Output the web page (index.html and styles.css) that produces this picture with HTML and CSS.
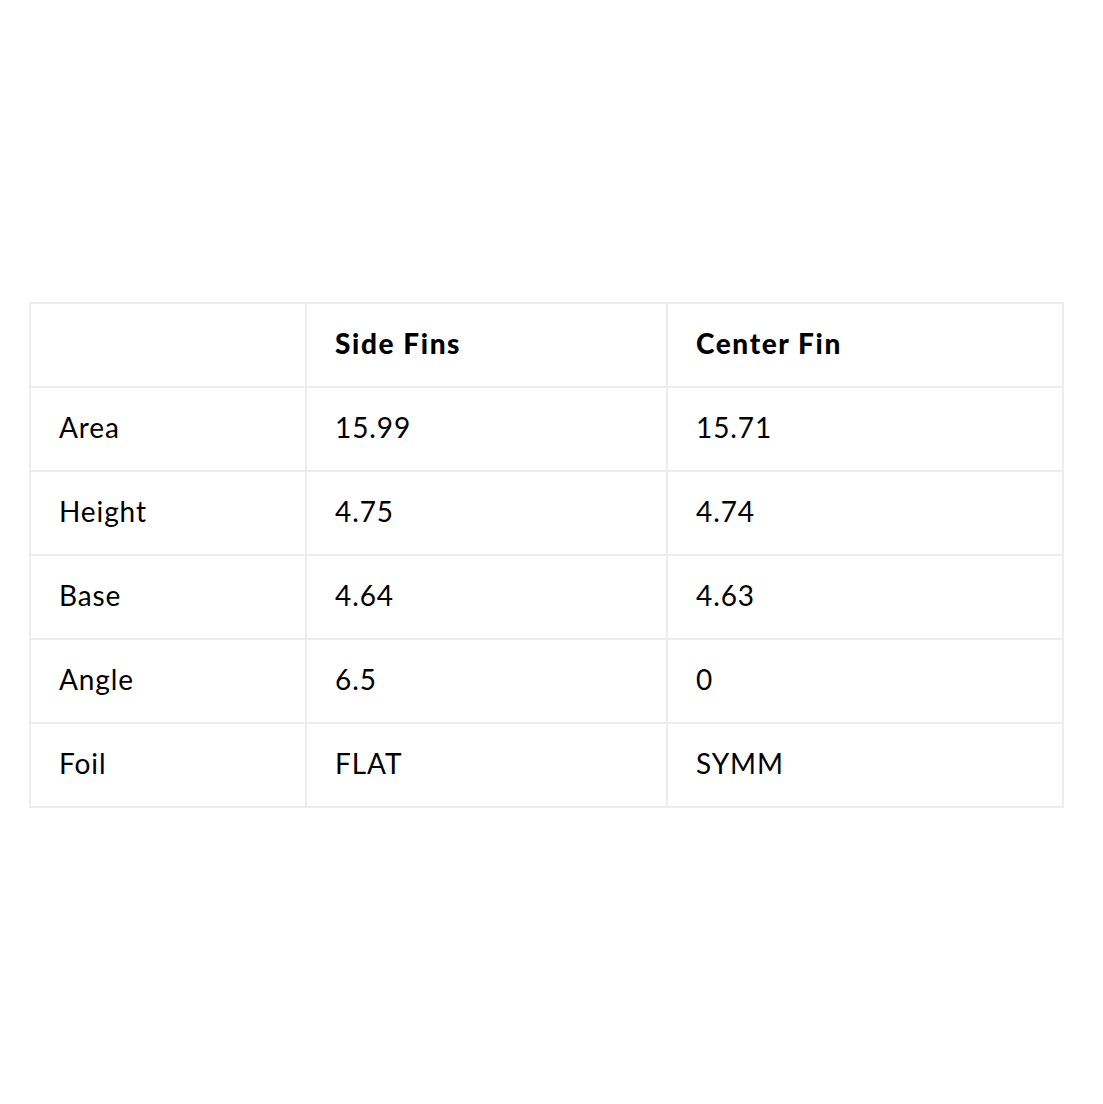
FILE: index.html
```html
<!DOCTYPE html>
<html lang="en">
<head>
<meta charset="utf-8">
<title>Fin specs</title>
<link rel="stylesheet" href="styles.css">
</head>
<body>
<main class="page">
  <table class="specs">
    <colgroup>
      <col class="c1"><col class="c2"><col class="c3">
    </colgroup>
    <thead>
      <tr><th></th><th>Side Fins</th><th>Center Fin</th></tr>
    </thead>
    <tbody>
      <tr><td>Area</td><td>15.99</td><td>15.71</td></tr>
      <tr><td>Height</td><td>4.75</td><td>4.74</td></tr>
      <tr><td>Base</td><td>4.64</td><td>4.63</td></tr>
      <tr><td>Angle</td><td>6.5</td><td>0</td></tr>
      <tr><td>Foil</td><td>FLAT</td><td>SYMM</td></tr>
    </tbody>
  </table>
</main>
</body>
</html>
```

FILE: styles.css
```css
* { box-sizing: border-box; }
html, body { margin: 0; padding: 0; background: #fff; }
body {
  font-family: "Lato", "Noto Sans", sans-serif;
  color: #000;
}
.page {
  padding: 302px 40px 0 29px;
}
.specs {
  width: 1033px;
  border-collapse: collapse;
  table-layout: fixed;
}
.c1 { width: 276px; }
.c2 { width: 361px; }
.c3 { width: 396px; }
.specs th, .specs td {
  border: 2px solid #ececec;
  height: 84px;
  padding: 0 0 4px 28px;
  text-align: left;
  vertical-align: middle;
  font-size: 28px;
  line-height: 1;
}
.specs th {
  font-weight: 900;
  letter-spacing: 1.6px;
}
.specs td {
  font-weight: 400;
  letter-spacing: 0.9px;
}
```
